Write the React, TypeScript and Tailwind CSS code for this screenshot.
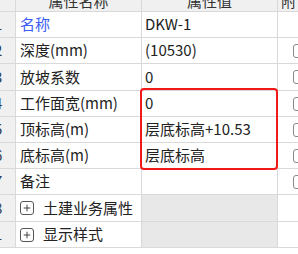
import { Plus } from "lucide-react";

type Row = { idx: string; name: string; value: string; check: boolean; h: string; group?: boolean; blue?: boolean };

const rows: Row[] = [
  { idx: "1", name: "名称", value: "DKW-1", check: false, h: "h-[26px]", blue: true },
  { idx: "2", name: "深度(mm)", value: "(10530)", check: true, h: "h-[26px]" },
  { idx: "3", name: "放坡系数", value: "0", check: true, h: "h-[27px]" },
  { idx: "4", name: "工作面宽(mm)", value: "0", check: true, h: "h-[26px]" },
  { idx: "5", name: "顶标高(m)", value: "层底标高+10.53", check: true, h: "h-[26px]" },
  { idx: "6", name: "底标高(m)", value: "层底标高", check: true, h: "h-[26px]" },
  { idx: "7", name: "备注", value: "", check: true, h: "h-[26px]" },
  { idx: "8", name: "土建业务属性", value: "", check: false, h: "h-[27px]", group: true },
  { idx: "1", name: "显示样式", value: "", check: false, h: "h-[26px]", group: true },
];

const font = { fontFamily: '"Noto Sans CJK SC", "Noto Sans", sans-serif' };

export default function App() {
  return (
    <div className="relative w-[298px] h-[254px] overflow-hidden bg-white text-[15px] text-[#222]" style={font}>
      <div className="flex h-[12px] border-b border-[#d9d9d9] bg-[#f0f0f0] overflow-hidden">
        <div className="w-[16px] shrink-0 border-r border-[#d9d9d9]" />
        <div className="w-[126px] shrink-0 border-r border-[#d9d9d9] text-center leading-[24px] -mt-[11px] text-[#333]">属性名称</div>
        <div className="w-[136px] shrink-0 border-r border-[#d9d9d9] text-center leading-[24px] -mt-[11px] text-[#333]">属性值</div>
        <div className="flex-1 pl-[3px] leading-[24px] -mt-[11px] text-[#333]">附</div>
      </div>
      {rows.map((r, i) => (
        <div key={i} className={`flex ${r.h} border-b border-[#d9d9d9]`}>
          <div className="w-[16px] shrink-0 border-r border-[#d9d9d9] bg-[#f0f0f0] text-[#2e3b4c] flex items-center overflow-hidden">
            <span className="-ml-[6px]">{r.idx}</span>
          </div>
          <div className="w-[126px] shrink-0 border-r border-[#d9d9d9] flex items-center pl-[4px]">
            {r.group ? (
              <>
                <span className="flex h-[14px] w-[14px] items-center justify-center rounded-[3px] border border-[#555]">
                  <Plus className="h-[10px] w-[10px]" strokeWidth={2} />
                </span>
                <span className="ml-[9px]">{r.name}</span>
              </>
            ) : (
              <span className={r.blue ? "text-[#3b5cf6]" : ""}>{r.name}</span>
            )}
          </div>
          <div className={`w-[136px] shrink-0 border-r border-[#d9d9d9] flex items-center pl-[3px] ${r.group ? "bg-[#e8e8e8]" : ""}`}>
            {r.value}
          </div>
          <div className="flex-1 flex items-center pl-[15px]">
            {r.check && <span className="h-[14px] w-[14px] shrink-0 rounded-[3px] border border-[#8a8a8a] bg-white" />}
          </div>
        </div>
      ))}
      <div className="absolute left-[140px] top-[88px] w-[138px] h-[82px] rounded-[4px] border-[2px] border-[#f21818]" />
    </div>
  );
}
